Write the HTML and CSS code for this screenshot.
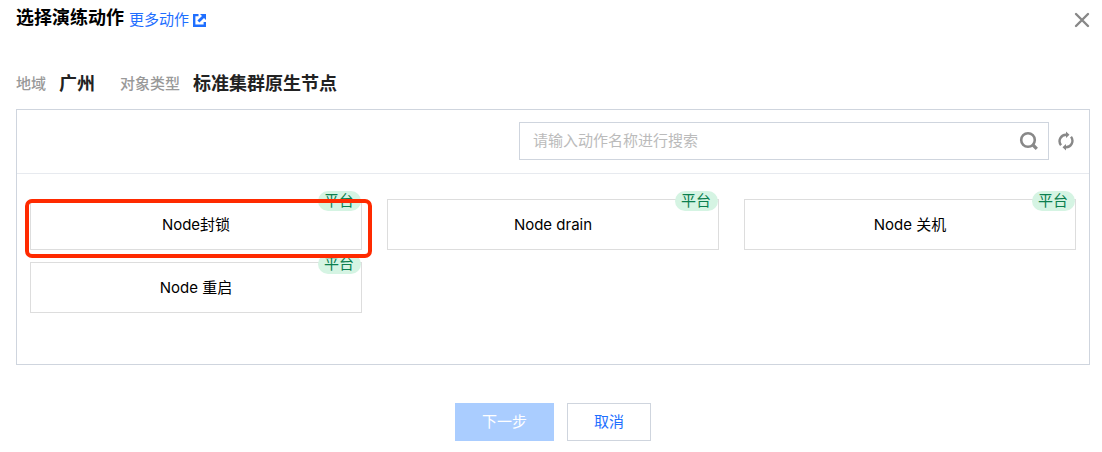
FILE: index.html
```html
<!DOCTYPE html>
<html lang="zh-CN">
<head>
<meta charset="utf-8">
<title>选择演练动作</title>
<link rel="stylesheet" href="styles.css">
</head>
<body>
<main class="dialog">
  <header class="header">
    <h1 class="title">选择演练动作</h1>
    <a class="more" href="#">更多动作
      <svg class="more-icon" viewBox="0 0 13 13" aria-hidden="true"><path d="M0 0h5.500v2.200H2.400v8.200h8.200V8H13v5H0z" fill="currentColor"/><path d="M7 0h6v6l-2-2-4.600 4.600-2-2L9 2z" fill="currentColor"/></svg>
    </a>
    <button class="icon-button close" type="button" aria-label="关闭">
      <svg width="16" height="16" viewBox="0 0 16 16"><path d="m2 2 12 12M14 2 2 14" fill="none" stroke="currentColor" stroke-width="2.400" stroke-linecap="round"/></svg>
    </button>
  </header>

  <dl class="facts">
    <div class="fact"><dt>地域</dt><dd>广州</dd></div>
    <div class="fact"><dt>对象类型</dt><dd>标准集群原生节点</dd></div>
  </dl>

  <section class="panel">
    <div class="toolbar">
      <div class="search">
        <input class="search-input" type="text" aria-label="搜索动作" placeholder="请输入动作名称进行搜索">
        <button class="icon-button" type="button" aria-label="搜索">
          <svg width="20" height="20" viewBox="0 0 20 20"><circle cx="9" cy="9" r="6.800" fill="none" stroke="currentColor" stroke-width="2.600"/><path d="m13.500 13.500 4.300 4.300" stroke="currentColor" stroke-width="3.200"/></svg>
        </button>
      </div>
      <button class="icon-button" type="button" aria-label="刷新">
        <svg width="18" height="20" viewBox="0 0 18 20"><path d="M4 14.200A6.500 6.500 0 0 1 9.500 3.700M14 5.800A6.500 6.500 0 0 1 8.500 16.300" fill="none" stroke="currentColor" stroke-width="2.400"/><path d="m9 .5 3.500 3.200L9 7zM9 13l-3.500 3.300L9 19.500z" fill="currentColor"/></svg>
      </button>
    </div>
    <div class="actions">
      <button class="action action-marked" type="button">Node封锁<span class="tag">平台</span></button>
      <button class="action" type="button">Node drain<span class="tag">平台</span></button>
      <button class="action" type="button">Node 关机<span class="tag">平台</span></button>
      <button class="action" type="button">Node 重启<span class="tag">平台</span></button>
    </div>
  </section>

  <footer class="footer">
    <button class="button button-primary" type="button" disabled>下一步</button>
    <button class="button" type="button">取消</button>
  </footer>
</main>
</body>
</html>
```
FILE: styles.css
```css
* {
  box-sizing: border-box;
}

body {
  margin: 0;
  background: #fff;
  color: #000;
  font-family: Inter, "Noto Sans CJK SC", sans-serif;
  font-size: 15px;
  line-height: 20px;
}

button,
input {
  margin: 0;
  font: inherit;
}

.dialog {
  padding: 6px 12px 12px 16px;
}

.header {
  display: flex;
  align-items: center;
  gap: 5px;
}

.title {
  margin: 0;
  font-size: 18px;
  font-weight: 700;
  line-height: 24px;
}

.more {
  display: flex;
  align-items: center;
  gap: 4px;
  padding-top: 4px;
  color: #1f6fff;
  text-decoration: none;
}

.more-icon {
  width: 13px;
  height: 13px;
}

.icon-button {
  display: flex;
  padding: 0;
  border: 0;
  background: none;
  color: #888;
}

.close {
  margin-left: auto;
  padding-top: 4px;
}

.facts {
  display: flex;
  gap: 25px;
  margin: 42px 0 13px;
}

.fact {
  display: flex;
  align-items: center;
  gap: 13px;
}

.fact dt {
  color: #999;
  font-weight: 500;
}

.fact dd {
  margin: 0;
  color: #222;
  font-size: 18px;
  font-weight: 700;
  line-height: 24px;
}

.panel {
  min-height: 256px;
  border: 1px solid #cfd5de;
}

.toolbar {
  display: flex;
  align-items: center;
  justify-content: flex-end;
  gap: 8px;
  padding: 12px 14px 13px 12px;
  border-bottom: 1px solid #e7eaef;
}

.search {
  display: flex;
  align-items: center;
  flex: 0 1 530px;
  height: 38px;
  padding: 0 9px 0 13px;
  border: 1px solid #cfd5de;
}

.search-input {
  flex: 1;
  min-width: 0;
  padding: 0;
  border: 0;
  outline: 0;
  background: none;
}

.search-input::placeholder {
  color: #bbb;
  opacity: 1;
}

.actions {
  display: grid;
  grid-template-columns: repeat(3, 1fr);
  gap: 12px 25px;
  padding: 25px 13px;
}

.action {
  position: relative;
  height: 51px;
  padding: 0;
  border: 1px solid #ddd;
  background: #fff;
  color: #000;
}

.tag {
  position: absolute;
  top: -9px;
  right: 0;
  padding: 0 7px 0 6px;
  border-radius: 10px;
  background: #d5f4e3;
  color: #0b7f4f;
  line-height: 20px;
}

.action-marked {
  z-index: 1;
}

.action-marked::after {
  position: absolute;
  inset: -1px -11px -9px -6px;
  border: 4px solid #ff2a00;
  border-radius: 7px;
  content: "";
}

.footer {
  display: flex;
  justify-content: center;
  gap: 13px;
  margin-top: 38px;
}

.button {
  height: 38px;
  padding: 0 26px;
  border: 1px solid #cfd5de;
  background: #fff;
  color: #1f6fff;
}

.button-primary {
  border-color: #aacdff;
  background: #aacdff;
  color: #fff;
}
```
